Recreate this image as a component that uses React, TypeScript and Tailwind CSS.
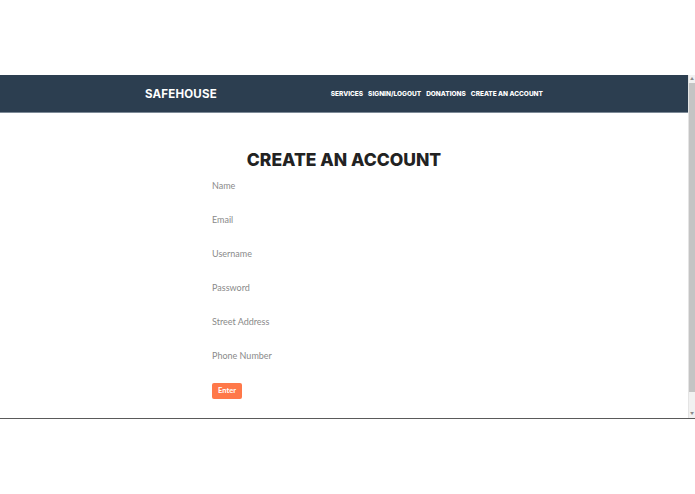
import React from 'react';

const links = ['SERVICES', 'SIGNIN/LOGOUT', 'DONATIONS', 'CREATE AN ACCOUNT'];
const fields = ['Name', 'Email', 'Username', 'Password', 'Street Address', 'Phone Number'];

const App: React.FC = () => {
  return (
    <div className="w-[695px] h-[494px] bg-white overflow-hidden" style={{ fontFamily: 'Inter, "DejaVu Sans", sans-serif' }}>
      <div className="h-[75px]" />
      {/* page frame */}
      <div className="h-[344px] flex border-b border-[#5a5a5a]">
        <div className="flex-1 flex flex-col">
          {/* Navbar */}
          <header className="h-[38px] bg-[#2c3e50] border-b border-[#7d8a97] flex items-center">
            <div className="w-[398px] mx-auto flex items-center justify-between pt-[2px]">
              <span className="text-white font-bold text-[11.5px] tracking-[0.2px]">SAFEHOUSE</span>
              <nav className="flex items-center gap-[5px]">
                {links.map((l) => (
                  <a key={l} className="text-white font-extrabold text-[6.5px]">
                    {l}
                  </a>
                ))}
              </nav>
            </div>
          </header>

          <main className="flex flex-col items-center pt-[36px]">
            <h1 className="text-[17.5px] leading-[22px] font-extrabold text-[#222] mb-[9px]">CREATE AN ACCOUNT</h1>
            <form className="w-[264px] flex flex-col" style={{ fontFamily: 'Lato, "Open Sans", sans-serif' }}>
              {fields.map((f) => (
                <div key={f} className="h-[34px] flex flex-col">
                  <label className="text-[9px] leading-[12px] text-[#8a8a8a]">{f}</label>
                </div>
              ))}
              <button type="button" className="block mt-[-1px] w-[30px] h-[16px] rounded-[2px] bg-[#ff7849] text-white text-[7.5px] font-bold leading-none">
                Enter
              </button>
            </form>
          </main>
        </div>
        {/* scrollbar */}
        <div className="w-[7px] bg-[#f1f1f1] border-l border-[#e4e4e4] flex flex-col items-center">
          <div className="h-[8px] flex items-center justify-center text-[#8a8a8a] text-[4px] leading-none">▲</div>
          <div className="w-[6px] h-[309px] bg-[#c4c4c4]" />
          <div className="flex-1" />
          <div className="h-[8px] flex items-center justify-center text-[#8a8a8a] text-[4px] leading-none">▼</div>
        </div>
      </div>
    </div>
  );
};

export default App;
